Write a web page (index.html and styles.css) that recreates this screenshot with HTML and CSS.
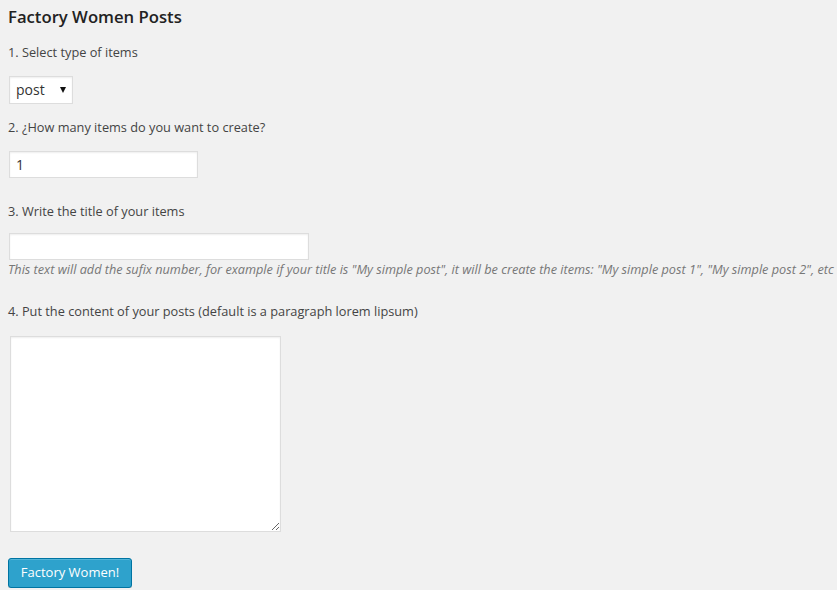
FILE: index.html
```html
<!DOCTYPE html>
<html lang="en">
<head>
<meta charset="utf-8">
<title>Factory Women Posts</title>
<link rel="stylesheet" href="styles.css">
</head>
<body>
<div class="wrap">
  <h3 class="title">Factory Women Posts</h3>
  <form class="factory-form">
    <p class="label label-1">1. Select type of items</p>
    <div class="select-wrap">
      <select class="type-select">
        <option>post</option>
        <option>page</option>
      </select>
    </div>
    <p class="label label-2">2. ¿How many items do you want to create?</p>
    <input class="field field-count" type="text" value="1">
    <p class="label label-3">3. Write the title of your items</p>
    <input class="field field-title" type="text" value="">
    <p class="description">This text will add the sufix number, for example if your title is "My simple post", it will be create the items: "My simple post 1", "My simple post 2", etc</p>
    <p class="label label-4">4. Put the content of your posts (default is a paragraph lorem lipsum)</p>
    <textarea class="content-area"></textarea>
    <div class="actions">
      <button type="button" class="button-primary">Factory Women!</button>
    </div>
  </form>
</div>
</body>
</html>
```
FILE: styles.css
```css
html, body {
  margin: 0;
  padding: 0;
  background: #f1f1f1;
}
body {
  font-family: "Open Sans", "Liberation Sans", sans-serif;
  font-size: 12.75px;
  color: #444;
}
.wrap {
  padding: 5px 8px 0 8px;
}
.title {
  margin: 0;
  font-size: 16.7px;
  line-height: 24px;
  font-weight: 600;
  color: #222;
}
.factory-form {
  display: flex;
  flex-direction: column;
  align-items: flex-start;
}
.label {
  margin: 0;
  line-height: 18px;
}
.label-1 { margin-top: 14px; }
.label-2 { margin-top: 14px; }
.label-3 { margin-top: 24px; }
.label-4 { margin-top: 24px; }

.select-wrap {
  position: relative;
  margin-top: 15px;
  margin-left: 1px;
}
.select-wrap::after {
  content: "";
  position: absolute;
  right: 7px;
  top: 11px;
  width: 0;
  height: 0;
  border-left: 3.5px solid transparent;
  border-right: 3.5px solid transparent;
  border-top: 6px solid #111;
  pointer-events: none;
}
.type-select {
  appearance: none;
  -webkit-appearance: none;
  width: 64px;
  height: 28px;
  margin: 0;
  padding: 0 0 1px 6px;
  border: 1px solid #ddd;
  border-radius: 0;
  background: #fff;
  font-family: "Open Sans", "Liberation Sans", sans-serif;
  font-size: 14px;
  color: #333;
  box-shadow: inset 0 1px 2px rgba(0,0,0,.07);
}
.field {
  box-sizing: border-box;
  height: 27px;
  margin: 0 0 0 1px;
  padding: 0 6px;
  border: 1px solid #ddd;
  background: #fff;
  font-family: "Open Sans", "Liberation Sans", sans-serif;
  font-size: 14px;
  color: #333;
  box-shadow: inset 0 1px 2px rgba(0,0,0,.07);
  outline: none;
}
.field-count {
  margin-top: 15px;
  width: 189px;
}
.field-title {
  margin-top: 13px;
  width: 300px;
}
.description {
  margin: 0;
  font-size: 12.7px;
  line-height: 18px;
  font-style: italic;
  color: #777;
  white-space: nowrap;
}
.content-area {
  box-sizing: border-box;
  margin: 16px 0 0 2px;
  width: 271px;
  height: 196px;
  border: 1px solid #ddd;
  background: #fff;
  box-shadow: inset 0 1px 2px rgba(0,0,0,.07);
  font-family: "Open Sans", "Liberation Sans", sans-serif;
  font-size: 13px;
  padding: 2px 6px;
}
.actions {
  margin-top: 26px;
}
.button-primary {
  box-sizing: border-box;
  height: 30px;
  width: 124px;
  padding: 0 10px 1px;
  border: 1px solid #0074a2;
  border-radius: 3px;
  background: #2ea2cc;
  color: #fff;
  font-family: "Open Sans", "Liberation Sans", sans-serif;
  font-size: 13px;
  line-height: 27px;
  box-shadow: inset 0 1px 0 rgba(120,200,230,.5), 0 1px 0 rgba(0,0,0,.15);
  cursor: pointer;
}
```
